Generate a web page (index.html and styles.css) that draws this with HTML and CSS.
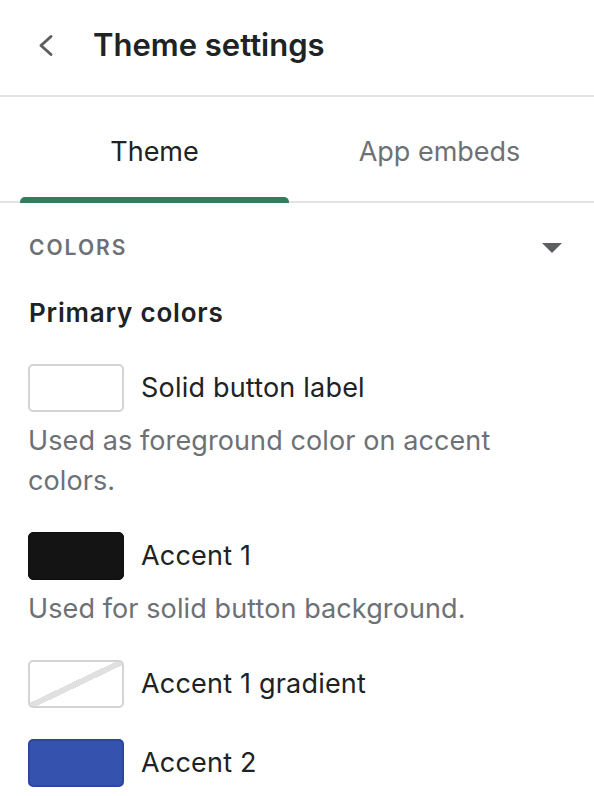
FILE: index.html
```html
<!DOCTYPE html>
<html lang="en">
<head>
<meta charset="utf-8">
<title>Theme settings</title>
<link rel="stylesheet" href="styles.css">
</head>
<body>
<div class="panel">
  <header class="header">
    <button class="back" aria-label="Back">
      <svg width="16" height="24" viewBox="0 0 16 24"><polyline points="13,2.5 3,11.5 13,20.5" fill="none" stroke="#5c5f62" stroke-width="3" stroke-linecap="round" stroke-linejoin="round"/></svg>
    </button>
    <h1 class="title">Theme settings</h1>
  </header>
  <nav class="tabs">
    <div class="tab tab-active">Theme</div>
    <div class="tab">App embeds</div>
  </nav>
  <section class="section">
    <div class="section-head">
      <span class="section-title">COLORS</span>
      <span class="caret"></span>
    </div>
    <h2 class="group-title">Primary colors</h2>
    <div class="setting">
      <div class="row"><span class="swatch swatch-white"></span><span class="label">Solid button label</span></div>
      <p class="help">Used as foreground color on accent colors.</p>
    </div>
    <div class="setting">
      <div class="row"><span class="swatch swatch-black"></span><span class="label">Accent 1</span></div>
      <p class="help">Used for solid button background.</p>
    </div>
    <div class="setting">
      <div class="row"><span class="swatch swatch-gradient"></span><span class="label">Accent 1 gradient</span></div>
    </div>
    <div class="setting">
      <div class="row"><span class="swatch swatch-blue"></span><span class="label">Accent 2</span></div>
    </div>
  </section>
</div>
</body>
</html>
```
FILE: styles.css
```css
* { box-sizing: border-box; }
html, body { margin: 0; padding: 0; background: #fff; }
body {
  font-family: Inter, "Noto Sans", "Liberation Sans", sans-serif;
  color: #202223;
  overflow: hidden;
}
.panel { width: 594px; }
.header {
  height: 97px;
  display: flex;
  align-items: flex-start;
  padding: 25px 0 0 38px;
  border-bottom: 2px solid #e3e3e3;
}
.back {
  border: 0;
  background: none;
  padding: 0;
  margin: 9px 0 0 0;
  width: 18px;
  height: 24px;
  display: flex;
}
.title {
  margin: 0 0 0 37px;
  font-size: 31px;
  line-height: 40px;
  font-weight: 600;
}
.tabs {
  display: flex;
  gap: 16px;
  padding: 0 20px;
  height: 106px;
  border-bottom: 2px solid #e3e3e3;
}
.tab {
  flex: 1;
  position: relative;
  text-align: center;
  font-size: 27px;
  line-height: 32px;
  padding-top: 39px;
  color: #6d7175;
}
.tab-active { color: #202223; }
.tab-active::after {
  content: "";
  position: absolute;
  left: 0;
  right: 0;
  bottom: -2px;
  height: 6px;
  background: #347c5c;
  border-radius: 5px 5px 0 0;
}
.section { padding: 33px 32px 0 28px; }
.section-head {
  display: flex;
  align-items: center;
  justify-content: space-between;
  height: 24px;
}
.section-title {
  font-size: 21px;
  line-height: 24px;
  font-weight: 600;
  color: #6d7175;
  letter-spacing: 2px;
  padding-left: 1px;
}
.caret {
  width: 0;
  height: 0;
  border-left: 10px solid transparent;
  border-right: 10px solid transparent;
  border-top: 10px solid #5c5f62;
}
.group-title {
  margin: 37px 0 35px 1px;
  font-size: 26px;
  line-height: 32px;
  font-weight: 600;
  letter-spacing: 0.8px;
}
.setting { margin-bottom: 31px; }
.row {
  display: flex;
  align-items: center;
  gap: 17px;
}
.swatch {
  width: 96px;
  height: 48px;
  border-radius: 5px;
  flex: none;
}
.swatch-white { background: #fff; border: 2px solid #d2d4d6; }
.swatch-black { background: #141414; border: 1px solid #0f0f0f; }
.swatch-gradient {
  border: 2px solid #d2d4d6;
  background: linear-gradient(to bottom right, #fff calc(50% - 3px), #e0e0e0 calc(50% - 3px), #e0e0e0 calc(50% + 3px), #fff calc(50% + 3px));
}
.swatch-blue { background: #3652af; border: 2px solid #2e479c; }
.label {
  font-size: 27px;
  line-height: 48px;
  letter-spacing: 0.2px;
}
.help {
  margin: 9px 0 0 0;
  font-size: 27px;
  line-height: 40px;
  letter-spacing: 0.1px;
  color: #6d7175;
}
```
